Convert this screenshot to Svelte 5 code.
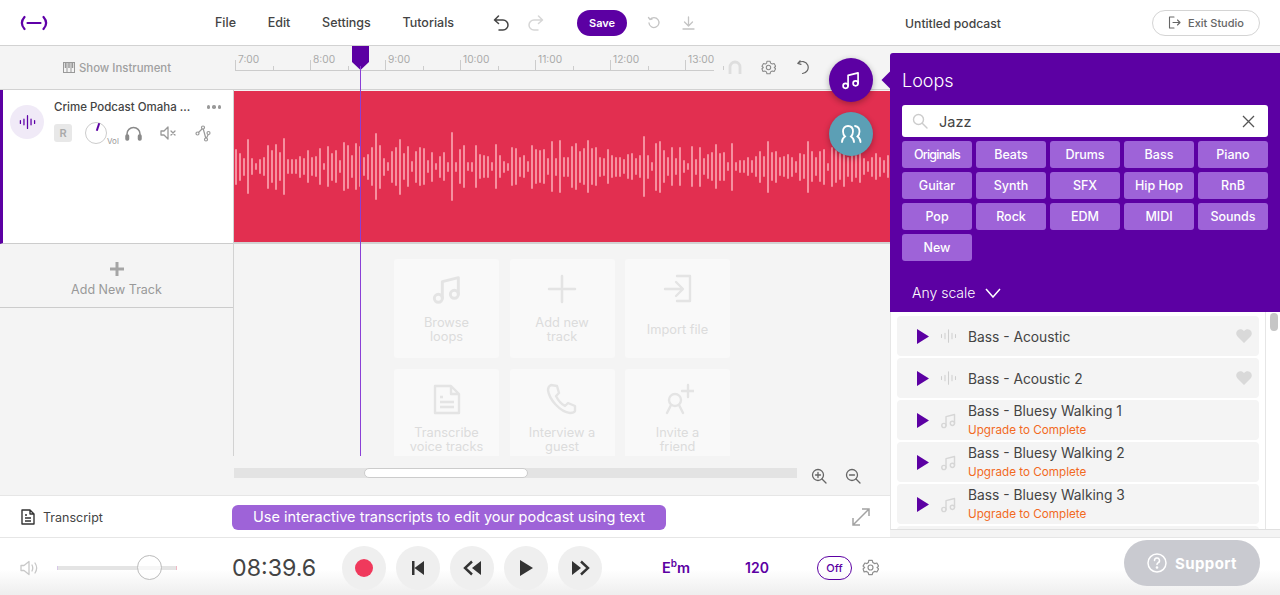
<script>
  const nav = ['File', 'Edit', 'Settings', 'Tutorials'];
  const times = ['7:00', '8:00', '9:00', '10:00', '11:00', '12:00', '13:00'];
  const tags = ['Originals', 'Beats', 'Drums', 'Bass', 'Piano', 'Guitar', 'Synth', 'SFX', 'Hip Hop', 'RnB', 'Pop', 'Rock', 'EDM', 'MIDI', 'Sounds', 'New'];
  const first = [36,28,18,55,17,7,15,19,44,33,46,29,57,15,15,15,22,17,33,19,21,37,7,41,28,33,13,49,44,23,47,41,19,26,39,67,44,18,9,32,39,56,27,41,11,32,39,37,13];
  const tops = [455,490,467,457,485,397,485,447,435,487,485,435,462,465,467,487,432,465,482,488,442,445,470,465,483,434,447,450,447,474,424,473,420,470,470,437,430,452,445,420,445,442,470,473,447,465,470,470,477,462,460,474,466,408,464,486,428,422,450,472,442,474,442,480,490,438,476,440,474,462,456,432,458,456,486,428,486,480,480,472,480,468,452,468,422,456,452,472,468,462,470,482,458,462,422,454,472,454,446,488,440,450,460,440,470,455,465,450,474,484,470,460,470,480,465];
  const bars = [...first, ...tops.map((t) => Math.round((2 * (500 - t)) / 3))];
  const cards = [
    { id: 'note', a: 'Browse', b: 'loops' },
    { id: 'plus', a: 'Add new', b: 'track' },
    { id: 'import', a: 'Import file', b: '' },
    { id: 'doc', a: 'Transcribe', b: 'voice tracks' },
    { id: 'phone', a: 'Interview a', b: 'guest' },
    { id: 'invite', a: 'Invite a', b: 'friend' }
  ];
  const loops = [
    { name: 'Bass - Acoustic', kind: 'wave' },
    { name: 'Bass - Acoustic 2', kind: 'wave' },
    { name: 'Bass - Bluesy Walking 1', kind: 'note' },
    { name: 'Bass - Bluesy Walking 2', kind: 'note' },
    { name: 'Bass - Bluesy Walking 3', kind: 'note' },
    { name: '', kind: 'none' }
  ];
</script>

{#snippet noteIcon(size, color, sw)}
  <svg width={size} height={size} viewBox="0 0 24 24" fill="none" stroke={color} stroke-width={sw} stroke-linejoin="round" stroke-linecap="round">
    <circle cx="5.500" cy="19" r="3" /><circle cx="17.500" cy="16" r="3" />
    <path d="M8.500 19V6.500L20.500 3.500V16" />
  </svg>
{/snippet}
{#snippet gear(size, color)}
  <svg width={size} height={size} viewBox="0 0 24 24" fill="none" stroke={color} stroke-width="1.700" stroke-linejoin="round">
    <path d="M9.500 2h5l.8 3 2.700 1.500 3-.8 2.500 4.300-2.200 2 2.200 2-2.500 4.300-3-.8-2.700 1.500-.8 3h-5l-.8-3-2.700-1.500-3 .8L1.500 14l2.200-2-2.200-2L4 5.700l3 .8L9 5z" />
    <circle cx="12" cy="12" r="3.500" />
  </svg>
{/snippet}
{#snippet wave(w, h, color, sw)}
  <svg width={w} height={h} viewBox="0 0 24 20" fill="none" stroke={color} stroke-width={sw} stroke-linecap="round">
    <path d="M2 8v4M7 6v8M12 1v18M17 6v8M22 8v4" />
  </svg>
{/snippet}

<div class="app">
  <header class="top">
    <svg class="logo" width="28" height="16" viewBox="0 0 28 16" fill="none" stroke="#5f00a8" stroke-width="2.200" stroke-linecap="round">
      <path d="M4.500 2C1 6 1 10 4.500 14M23.500 2C27 6 27 10 23.500 14M7.500 8h13" />
    </svg>
    <nav class="nav">
      {#each nav as item}<span>{item}</span>{/each}
    </nav>
    <div class="undo">
      <svg width="17" height="16" viewBox="0 0 17 16" fill="none" stroke="#444" stroke-width="1.500" stroke-linecap="round" stroke-linejoin="round"><path d="M5.500 1 1.500 5l4 3.500M1.500 5H10a5 5 0 0 1 0 10H6" /></svg>
      <svg width="17" height="16" viewBox="0 0 17 16" fill="none" stroke="#d6d6d6" stroke-width="1.500" stroke-linecap="round" stroke-linejoin="round"><path d="M11.500 1l4 4-4 3.500M15.500 5H7a5 5 0 0 0 0 10h4" /></svg>
    </div>
    <button class="save">Save</button>
    <svg class="hist" width="14" height="14" viewBox="0 0 14 14" fill="none" stroke="#c4c4c4" stroke-width="1.300" stroke-linecap="round"><path d="M3 3.500A5 5 0 1 1 2 7M1.500 1.500 3 3.500l2-.3" /></svg>
    <svg class="down" width="13" height="14" viewBox="0 0 13 14" fill="none" stroke="#c4c4c4" stroke-width="1.300" stroke-linecap="round" stroke-linejoin="round"><path d="M6.500 1v8.500M2.500 6l4 4 4-4M1 13h11" /></svg>
    <span class="title">Untitled podcast</span>
    <button class="exit">
      <svg width="13" height="13" viewBox="0 0 13 13" fill="none" stroke="#666" stroke-width="1.100" stroke-linecap="round" stroke-linejoin="round"><path d="M6 1H1.500v11H6M5 6.500h7M9.500 4l2.500 2.500L9.500 9" /></svg>
      Exit Studio
    </button>
  </header>

  <main class="main">
    <div class="ruler-row">
      <div class="show">
        <svg width="12" height="11" viewBox="0 0 12 11" fill="none" stroke="#999" stroke-width="1"><rect x=".5" y=".5" width="11" height="10" /><path d="M4 .5v10M8 .5v10" /><path d="M2.500 1v5M6 1v5M9.500 1v5" stroke-width="1.500" /></svg>
        Show Instrument
      </div>
      <div class="ruler">
        {#each times as t}
          <div class="cell"><span>{t}</span><b></b><i></i></div>
        {/each}
      </div>
      <div class="ruler-tools">
        <svg width="14" height="14" viewBox="0 0 14 14" fill="none" stroke="#dedede" stroke-width="2.800"><path d="M2 14V7a5 5 0 0 1 10 0v7" /></svg>
        <span class="tool-gear">{@render gear(15, '#8a8a8a')}</span>
        <svg width="15" height="15" viewBox="0 0 15 15" fill="none" stroke="#666" stroke-width="1.200" stroke-linecap="round" stroke-linejoin="round"><path d="M3 3.200A6 6 0 1 1 7.500 13.500M5 .8 2.800 3.400l3.200.9" /></svg>
      </div>
    </div>

    <div class="tracks">
      <aside class="side">
        <div class="track-head">
          <div class="avatar">{@render wave(17, 16, '#5f00a8', 1.800)}</div>
          <div class="track-info">
            <div class="name-row"><span class="name">Crime Podcast Omaha ...</span><span class="dots"><b></b><b></b><b></b></span></div>
            <div class="ctl-row">
              <span class="r">R</span>
              <span class="knob"><i></i><em>Vol</em></span>
              <svg width="17" height="15" viewBox="0 0 17 15" fill="none" stroke="#8a8a8a" stroke-width="1.500"><path d="M2 11V8a6.500 6.500 0 0 1 13 0v3" /><rect x="1" y="9" width="2.500" height="5" rx="1" fill="#8a8a8a" /><rect x="13.500" y="9" width="2.500" height="5" rx="1" fill="#8a8a8a" /></svg>
              <svg width="17" height="14" viewBox="0 0 17 14" fill="none" stroke="#999" stroke-width="1.300" stroke-linejoin="round" stroke-linecap="round"><path d="M1 5v4h3l4 4V1L4 5zM11 5l4 4M15 5l-4 4" /></svg>
              <svg width="16" height="17" viewBox="0 0 16 17" fill="none" stroke="#999" stroke-width="1.200"><path d="M3 8l5-5 3 11 2.500-5" /><circle cx="2.500" cy="8.500" r="1.500" fill="#fff" /><circle cx="8" cy="2.500" r="1.500" fill="#fff" /><circle cx="11" cy="14.500" r="1.500" fill="#fff" /><circle cx="13.500" cy="8" r="1.500" fill="#fff" /></svg>
            </div>
          </div>
        </div>
        <div class="add-track">
          <svg width="14" height="14" viewBox="0 0 14 14"><path d="M5.500 0h3v5.500H14v3H8.500V14h-3V8.500H0v-3h5.500z" fill="#a5a5a5" /></svg>
          Add New Track
        </div>
      </aside>
      <div class="canvas">
        <div class="clip">
          <div class="wavebars">
            {#each bars as h}<i style="height:{h}px"></i>{/each}
          </div>
        </div>
        <div class="empty">
          {#each cards as c}
            <div class="card" class:single={!c.b}>
              <span class="card-ic">
                {#if c.id === 'note'}
                  {@render noteIcon(32, '#e4e4e4', 2.200)}
                {:else if c.id === 'plus'}
                  <svg width="30" height="30" viewBox="0 0 30 30"><path d="M15 2v26M2 15h26" stroke="#e4e4e4" stroke-width="2.500" stroke-linecap="round" /></svg>
                {:else if c.id === 'import'}
                  <svg width="30" height="30" viewBox="0 0 30 30" fill="none" stroke="#e4e4e4" stroke-width="2.400" stroke-linecap="round" stroke-linejoin="round"><path d="M14 2h13v25H14M2 15h17M13 8l7 7-7 7" /></svg>
                {:else if c.id === 'doc'}
                  <svg width="28" height="31" viewBox="0 0 28 31" fill="none" stroke="#e4e4e4" stroke-width="2.400" stroke-linejoin="round"><path d="M2 2h16l8 8v19H2zM18 2v8h8M7 13h3M7 18h14M7 23h14" /></svg>
                {:else if c.id === 'phone'}
                  <svg width="32" height="32" viewBox="0 0 32 32" fill="none" stroke="#e4e4e4" stroke-width="2.400" stroke-linejoin="round"><path d="M5 2l6 1 2 7-3 3c2 4 5 8 9 10l3-3 7 3 0 5c-1 2-3 2-5 2C14 29 3 16 2 7c0-2 1-4 3-5z" /></svg>
                {:else}
                  <svg width="32" height="32" viewBox="0 0 32 32" fill="none" stroke="#e4e4e4" stroke-width="2.400" stroke-linecap="round"><circle cx="13" cy="17" r="6" /><path d="M9 22l-4 8M17 22l4 8M26 2v12M20 8h12" /></svg>
                {/if}
              </span>
              <span class="card-text">{c.a}{#if c.b}<br />{c.b}{/if}</span>
            </div>
          {/each}
        </div>
      </div>
    </div>

    <div class="scroll-row">
      <div class="scroll"><div class="thumb"></div></div>
      <svg width="16" height="16" viewBox="0 0 16 16" fill="none" stroke="#666" stroke-width="1.300" stroke-linecap="round"><circle cx="7" cy="7" r="5.500" /><path d="M11 11l4 4M7 4.500v5M4.500 7h5" /></svg>
      <svg width="16" height="16" viewBox="0 0 16 16" fill="none" stroke="#666" stroke-width="1.300" stroke-linecap="round"><circle cx="7" cy="7" r="5.500" /><path d="M11 11l4 4M4.500 7h5" /></svg>
    </div>

    <div class="playhead">
      <svg width="17" height="24" viewBox="0 0 17 24"><path d="M0 0h17v16l-8.500 8L0 16z" fill="#5c00a3" /></svg>
      <i></i>
    </div>
  </main>

  <section class="transcript">
    <div class="t-label">
      <svg width="14" height="16" viewBox="0 0 14 16" fill="none" stroke="#333" stroke-width="1.400" stroke-linejoin="round"><path d="M1 1h8l4 4v10H1zM9 1v4h4M4 6h2M4 9h6M4 12h6" /></svg>
      Transcript
    </div>
    <div class="t-banner">Use interactive transcripts to edit your podcast using text</div>
    <svg class="t-expand" width="18" height="18" viewBox="0 0 18 18" fill="none" stroke="#a3a3a3" stroke-width="1.500"><path d="M1 17 17 1M10 1h7v7M1 10v7h7" /></svg>
  </section>

  <footer class="transport">
    <svg class="spk" width="18" height="16" viewBox="0 0 18 16" fill="none" stroke="#c8c8c8" stroke-width="1.300" stroke-linejoin="round" stroke-linecap="round"><path d="M1 5.500v5h3l5 4V1.500l-5 4zM12 5c1 2 1 4 0 6M15 3c2 3 2 7 0 10" /></svg>
    <div class="slider"><span></span></div>
    <span class="time">08:39.6</span>
    <div class="btns">
      <button class="circ" aria-label="Record"><i class="rec"></i></button>
      <button class="circ" aria-label="Start"><svg width="14" height="16" viewBox="0 0 14 16" fill="#333"><path d="M1 1h2.500v14H1zM3.500 8 13 1v14z" /></svg></button>
      <button class="circ" aria-label="Back"><svg width="19" height="16" viewBox="0 0 19 16"><path d="M18 1v14l-9-7z" fill="#333" /><path d="M9 1.500 2 8l7 6.500" fill="none" stroke="#333" stroke-width="2.400" /></svg></button>
      <button class="circ" aria-label="Play"><svg width="13" height="16" viewBox="0 0 13 16" fill="#333"><path d="M0 0l13 8-13 8z" /></svg></button>
      <button class="circ" aria-label="Forward"><svg width="19" height="16" viewBox="0 0 19 16"><path d="M1 1v14l9-7z" fill="#333" /><path d="M10 1.500 17 8l-7 6.500" fill="none" stroke="#333" stroke-width="2.400" /></svg></button>
    </div>
    <span class="key">E<sup>b</sup>m</span>
    <span class="bpm">120</span>
    <span class="off">Off</span>
    <span class="foot-gear">{@render gear(17, '#8f8f8f')}</span>
  </footer>

  <div class="fab fab-a">{@render noteIcon(20, '#fff', 2)}</div>
  <div class="fab fab-b">
    <svg width="22" height="20" viewBox="0 0 22 20" fill="none" stroke="#fff" stroke-width="1.800" stroke-linecap="round"><path d="M2 18c0-3 1.500-4.500 3-5.500C3.500 11 3 9.500 3 7.500 3 4 5 2 8 2s5 2 5 5.500c0 2-.5 3.500-2 5 1.500 1 3 2.500 3 5.500" /><path d="M15 2c3 .5 4.500 2.500 4.500 5.500 0 2-.5 3.500-2 5 1.500 1 3 2.500 3 5.500" /></svg>
  </div>

  <aside class="panel">
    <span class="pointer"></span>
    <div class="panel-top">
      <h2>Loops</h2>
      <div class="search">
        <svg width="16" height="16" viewBox="0 0 16 16" fill="none" stroke="#ccc" stroke-width="1.400" stroke-linecap="round"><circle cx="6.500" cy="6.500" r="5" /><path d="M10.500 10.500 15 15" /></svg>
        <span>Jazz</span>
        <svg class="x" width="13" height="13" viewBox="0 0 13 13" stroke="#555" stroke-width="1.300"><path d="M1 1l11 11M12 1 1 12" /></svg>
      </div>
      <div class="tags">
        {#each tags as t}<span class:tight={t === 'Originals'}>{t}</span>{/each}
      </div>
      <div class="scale">
        Any scale
        <svg width="16" height="10" viewBox="0 0 16 10" fill="none" stroke="#fff" stroke-width="1.500"><path d="M1 1l7 8 7-8" /></svg>
      </div>
    </div>
    <div class="list-wrap">
      <div class="list">
        {#each loops as l}
          <div class="item">
            {#if l.kind !== 'none'}
              <svg class="play" width="12" height="15" viewBox="0 0 12 15"><path d="M0 0l12 7.500L0 15z" fill="#5c00a3" /></svg>
              <span class="kind">
                {#if l.kind === 'wave'}
                  {@render wave(17, 14, '#cfcfcf', 1.500)}
                {:else}
                  {@render noteIcon(17, '#d6d6d6', 2)}
                {/if}
              </span>
              <div class="item-text" class:two={l.kind === 'note'}>
                <span>{l.name}</span>
                {#if l.kind === 'note'}<small>Upgrade to Complete</small>{/if}
              </div>
              {#if l.kind === 'wave'}
                <svg class="heart" width="16" height="14" viewBox="0 0 16 14"><path d="M8 14 1.500 7.500C-.5 5.500 0 2.500 2 1c2-1.300 4.500-.8 6 1.200C9.500.2 12-.3 14 1c2 1.500 2.500 4.500.5 6.500z" fill="#d9d9d9" /></svg>
              {/if}
            {/if}
          </div>
        {/each}
      </div>
      <div class="vbar"><i></i></div>
    </div>
  </aside>

  <button class="support">
    <svg width="20" height="20" viewBox="0 0 20 20" fill="none" stroke="#fff" stroke-width="1.500"><circle cx="10" cy="10" r="9" /><path d="M7.500 7.500a2.500 2.500 0 1 1 3.500 2.300c-.7.400-1 .8-1 1.700" stroke-linecap="round" /><circle cx="10" cy="14.500" r=".6" fill="#fff" /></svg>
    Support
  </button>
</div>

<style>
  :global(body) { margin: 0; background: #fff; }
  .app {
    position: relative; width: 1280px; height: 595px; overflow: hidden;
    display: flex; flex-direction: column;
    font-family: Inter, "Liberation Sans", sans-serif; color: #333;
  }
  button { font-family: inherit; cursor: pointer; }
  .top {
    height: 45px; flex: none; box-sizing: border-box; display: flex; align-items: center;
    padding-left: 20px; background: #fff; font-size: 12.500px; font-weight: 500;
  }
  .logo { flex: none; }
  .nav { display: flex; gap: 31.700px; margin-left: 167px; color: #444; }
  .undo { display: flex; gap: 17px; margin-left: 39px; }
  .save {
    margin-left: 33px; width: 50px; height: 26px; border: 0; border-radius: 13px;
    background: #5c00a3; color: #fff; font-size: 11px; font-weight: 600; padding: 0;
  }
  .hist { margin-left: 20px; }
  .down { margin-left: 21px; }
  .title { margin-left: 210px; font-size: 12.200px; color: #444; padding-top: 1px; }
  .exit {
    margin-left: 151px; width: 108px; height: 26px; box-sizing: border-box; border: 1px solid #d4d4d4;
    border-radius: 13px; background: #fff; color: #666; font-size: 11px; font-weight: 500;
    display: flex; align-items: center; justify-content: center; gap: 7px; padding: 0; flex: none;
  }
  .main {
    position: relative; height: 449px; flex: none; background: #f4f4f4;
    border-top: 1px solid #d2d2d2; display: flex; flex-direction: column;
  }
  .ruler-row { height: 44px; flex: none; display: flex; border-bottom: 1px solid #d2d2d2; box-sizing: border-box; }
  .show {
    width: 234px; flex: none; display: flex; align-items: center; justify-content: center; gap: 4px;
    font-size: 11.400px; font-weight: 500; color: #a0a0a0;
  }
  .ruler { display: flex; width: 479px; flex: none; height: 25px; border-bottom: 1px solid #ccc; box-sizing: border-box; margin-left: 1px; }
  .cell {
    width: 75px; flex: none; position: relative; box-sizing: border-box;
    height: 24px; padding: 8px 0 0 3px; font-size: 10.200px; color: #aaa; line-height: 11px;
  }
  .cell b { position: absolute; left: 0; bottom: 0; width: 1px; height: 10px; background: #ccc; }
  .cell i { position: absolute; left: 38px; bottom: 0; width: 1px; height: 4px; background: #ccc; }
  .ruler-tools { display: flex; align-items: center; gap: 19px; margin-left: 14px; margin-top: -1px; }
  .tool-gear { display: flex; }
  .tracks { height: 366px; flex: none; display: flex; }
  .side { width: 234px; flex: none; box-sizing: border-box; border-right: 1px solid #d2d2d2; height: 366px; }
  .track-head {
    height: 154px; box-sizing: border-box; background: #fff; border-left: 3px solid #5c00a3;
    border-bottom: 1px solid #ccc; display: flex; padding: 15px 0 0 7px; gap: 10px;
  }
  .avatar {
    width: 34px; height: 34px; border-radius: 50%; background: #f0eaf7; display: flex;
    align-items: center; justify-content: center; flex: none;
  }
  .track-info { flex: 1; min-width: 0; }
  .name-row { display: flex; align-items: center; height: 12px; padding-right: 12px; justify-content: space-between; font-size: 11.500px; font-weight: 500; color: #444; white-space: nowrap; margin-top: -4px; }
  .dots { display: flex; gap: 2px; }
  .dots b { width: 3.500px; height: 3.500px; border-radius: 50%; background: #999; }
  .ctl-row { display: flex; align-items: center; margin-top: 9px; height: 22px; }
  .ctl-row > svg:nth-of-type(1) { margin-left: 18px; }
  .ctl-row > svg:nth-of-type(2) { margin-left: 18px; }
  .ctl-row > svg:nth-of-type(3) { margin-left: 18px; }
  .r {
    width: 18px; height: 18px; background: #e8e8e8; border-radius: 3px; color: #aaa;
    font-size: 11px; font-weight: 600; display: flex; align-items: center; justify-content: center;
  }
  .knob {
    position: relative; width: 22px; height: 22px; box-sizing: border-box; border: 1px solid #ccc;
    border-radius: 50%; margin-left: 13px; flex: none;
  }
  .knob i { position: absolute; left: 11px; top: 0; width: 2px; height: 8px; background: #5c00a3; transform: rotate(18deg); }
  .knob em { position: absolute; left: 21px; top: 13px; font-size: 8px; font-style: normal; color: #999; }
  .add-track {
    height: 64px; box-sizing: border-box; border-bottom: 1px solid #ccc; display: flex;
    flex-direction: column; align-items: center; justify-content: flex-start; gap: 6px;
    padding-top: 18px; font-size: 12.500px; color: #999;
  }
  .canvas { position: relative; flex: 1; overflow: hidden; height: 366px; }
  .clip {
    height: 154px; box-sizing: border-box; background: #e22f50; border-top: 1px solid #f4f4f4;
    border-bottom: 2px solid #d2d2d2; overflow: hidden;
  }
  .wavebars { display: flex; align-items: center; gap: 2px; height: 151px; padding-left: 1px; }
  .wavebars i { width: 2px; flex: none; background: #f6909f; border-radius: 1px; }
  .empty {
    display: grid; grid-template-columns: repeat(3, 105px); column-gap: 10.500px; row-gap: 11px;
    padding: 15px 0 0 160px;
  }
  .card {
    height: 99px; background: #f9f9f9; border-radius: 3px; display: flex; flex-direction: column;
    align-items: center; padding-top: 14px; box-sizing: border-box; gap: 11px;
  }
  .card-ic { height: 32px; display: flex; align-items: center; justify-content: center; }
  .card-text { font-size: 12.800px; line-height: 14px; color: #dcdcdc; text-align: center; }
  .card.single .card-text { margin-top: 7px; }
  .scroll-row { height: 37px; flex: none; display: flex; align-items: flex-start; padding: 12px 0 0 234px; box-sizing: border-box; }
  .scroll { width: 563px; height: 10px; background: #e3e3e3; position: relative; }
  .scroll-row svg:nth-of-type(1) { margin-left: 14px; }
  .scroll-row svg:nth-of-type(2) { margin-left: 18px; }
  .thumb { position: absolute; left: 130px; top: 0; width: 164px; height: 10px; box-sizing: border-box; background: #fff; border: 1px solid #ccc; border-radius: 5px; }
  .playhead { position: absolute; left: 352px; top: 0; width: 17px; height: 410px; }
  .playhead svg { display: block; }
  .playhead i { position: absolute; left: 8px; top: 20px; bottom: 0; width: 1px; background: #8a3fd6; }
  .transcript {
    height: 43px; flex: none; box-sizing: border-box; background: #fff; border-top: 1px solid #e6e6e6;
    border-bottom: 1px solid #e6e6e6; display: flex; align-items: center;
  }
  .t-label { width: 232px; flex: none; display: flex; align-items: center; gap: 8px; padding: 1px 0 0 21px; box-sizing: border-box; font-size: 12.500px; color: #444; }
  .t-banner {
    width: 434px; height: 25px; margin-top: 1px; background: #9e63d8; border-radius: 6px; color: #fff;
    font-size: 14.500px; line-height: 24px; padding-left: 21px; box-sizing: border-box; white-space: nowrap;
  }
  .t-expand { margin-left: 186px; }
  .transport {
    flex: 1; display: flex; align-items: center; padding: 2px 0 0 20px;
    background: linear-gradient(#fff 55%, #eeeeee 100%);
  }
  .slider { width: 120px; height: 4px; background: #e4e4e4; margin-left: 19px; position: relative; border-left: 1px solid #d8c8e8; border-right: 1px solid #f0b8c4; box-sizing: border-box; }
  .slider span { position: absolute; left: 79px; top: -11px; width: 25px; height: 25px; box-sizing: border-box; border-radius: 50%; background: rgba(255,255,255,.65); border: 1px solid #bbb; }
  .spk { flex: none; }
  .time { margin-left: 55px; font-size: 23.200px; color: #444; width: 110px; }
  .btns { display: flex; gap: 10px; }
  .circ { width: 44px; height: 44px; border: 0; border-radius: 50%; background: #efefef; display: flex; align-items: center; justify-content: center; padding: 0; }
  .rec { width: 18px; height: 18px; background: #f0395c; border-radius: 50%; }
  .key { margin-left: 60px; font-size: 14.500px; font-weight: 600; color: #5c00a3; width: 83px; }
  .key sup { font-size: 10px; line-height: 0; }
  .bpm { font-size: 14px; font-weight: 600; color: #5c00a3; width: 72px; }
  .off {
    width: 35px; height: 24px; box-sizing: border-box; border: 1px solid #5c00a3; border-radius: 12px;
    color: #5c00a3; font-size: 11px; font-weight: 500; display: flex; align-items: center; justify-content: center;
  }
  .foot-gear { display: flex; margin-left: 10px; }
  .fab {
    position: absolute; left: 829px; width: 44px; height: 44px; border-radius: 50%;
    display: flex; align-items: center; justify-content: center; box-shadow: 0 2px 6px rgba(0,0,0,.3);
  }
  .fab-a { top: 58px; background: #5c00a3; }
  .fab-b { top: 112px; background: #5c9fb5; }
  .panel { position: absolute; left: 890px; top: 53px; width: 390px; height: 484px; background: #f4f4f4; display: flex; flex-direction: column; border-radius: 3px 0 0 0; }
  .pointer { position: absolute; left: -6px; top: 21px; width: 12px; height: 12px; background: #5c00a3; transform: rotate(45deg); }
  .panel-top { position: relative; height: 259px; flex: none; background: #5c00a3; padding: 15px 12px 0; box-sizing: border-box; border-radius: 3px 0 0 0; }
  h2 { margin: 0; font-size: 18px; font-weight: 300; color: #fff; line-height: 25px; }
  .search { height: 32px; margin-top: 12px; background: #fff; border-radius: 3px; display: flex; align-items: center; padding: 0 13px 0 10px; gap: 11px; font-size: 14.500px; color: #444; }
  .x { margin-left: auto; }
  .tags { display: grid; grid-template-columns: repeat(5, 70px); gap: 4px; margin-top: 4px; }
  .tags span { height: 27px; border-radius: 3px; background: #9e63d8; color: #fff; font-size: 12.500px; font-weight: 500; display: flex; align-items: center; justify-content: center; }
  .tags span.tight { letter-spacing: -.8px; }
  .scale { display: flex; align-items: center; gap: 10px; margin-top: 23px; padding-left: 10px; color: #fff; font-size: 14px; font-weight: 300; }
  .list-wrap { height: 218px; background: #fff; border-left: 1px solid #e6e6e6; border-bottom: 1px solid #e0e0e0; display: flex; overflow: hidden; box-sizing: border-box; }
  .list { padding: 4px 0 0 6px; width: 362px; flex: none; box-sizing: content-box; display: flex; flex-direction: column; gap: 2px; }
  .item { height: 40px; flex: none; background: #f4f4f4; border-radius: 4px; display: flex; align-items: center; position: relative; }
  .play { margin-left: 20px; flex: none; }
  .kind { margin-left: 11px; width: 17px; display: flex; flex: none; }
  .item-text { margin-left: 11px; display: flex; flex-direction: column; font-size: 13.800px; color: #444; padding-top: 1px; }
  .item-text.two { padding-top: 0; }
  .item-text.two span { margin-top: -2px; }
  .item-text small { font-size: 11.700px; color: #f26a1f; line-height: 13px; margin-top: 4px; margin-bottom: -1px; }
  .item-text span { line-height: 18px; }
  .heart { position: absolute; right: 7px; top: 13px; }
  .vbar { margin-left: 6px; width: 14px; border-left: 1px solid #e6e6e6; position: relative; }
  .vbar i { position: absolute; left: 4px; top: 1px; width: 8px; height: 18px; background: #c6c6c6; border-radius: 4px; }
  .support {
    position: absolute; left: 1124px; top: 540px; width: 136px; height: 46px; border: 0; border-radius: 23px;
    background: #c9cad0; color: #fff; font-size: 15px; font-weight: 700; display: flex; align-items: center;
    justify-content: center; gap: 8px; padding: 0; letter-spacing: .4px;
  }
</style>
